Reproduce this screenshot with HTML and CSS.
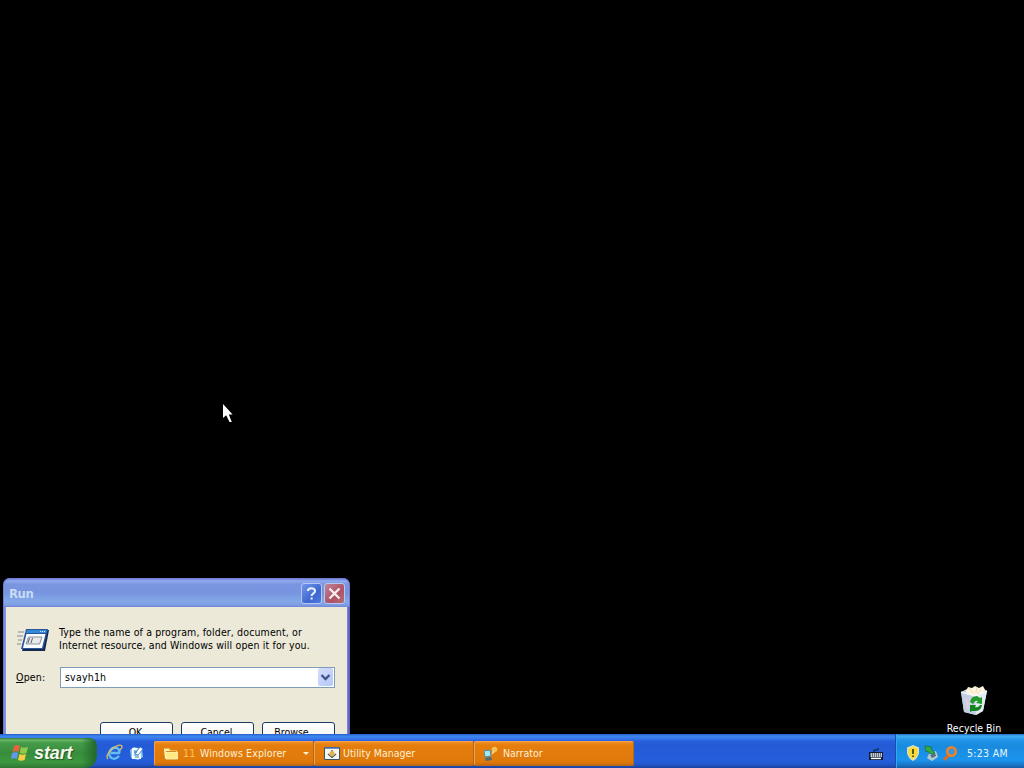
FILE: index.html
```html
<!DOCTYPE html>
<html lang="en">
<head>
<meta charset="utf-8">
<title>Desktop</title>
<link rel="stylesheet" href="styles.css">
</head>
<body>
<main class="desktop">
  <svg class="cursor" width="10" height="19" viewBox="0 0 10 19"><path d="M0 0V14L3.200 11.200L6.500 18H8.800L5.800 10.500H9.600Z" fill="#fff"/></svg>

  <div class="recycle">
    <svg width="32" height="32" viewBox="0 0 32 32">
      <path d="M3 7L9 4L26 4L29 6L25 26L18 30L6 27Z" fill="#c9d5e4"/>
      <path d="M3 7L6 27L18 30L17 11Z" fill="#c2cfe2"/>
      <path d="M17 11L29 6L25 26L18 30Z" fill="#e2edf0"/>
      <path d="M8 6L10 2L14 3L17 1L21 3L25 1L27 5L24 8L17 11L9 9Z" fill="#fff5dc"/>
      <path d="M11 3L15 8M19 2L18 8M23 4L20 9" stroke="#e8dbbd"/>
      <path d="M3 7L17 11L29 6" fill="none" stroke="#f7faff" stroke-width="1.2"/>
      <path d="M8 13L10 24M12 13L13 26M8 20L14 16" stroke="#dfcfe3" stroke-width="2"/>
      <path d="M12 17Q13 11 19 11L22 13L24 12V19L18 18L20 16Q17 15 15 19Z" fill="#239a2d"/>
      <path d="M12 20L18 20L17 22Q20 23 22 20L24 20Q23 26 17 26L14 26L12 27Z" fill="#168322"/>
    </svg>
    <span class="recycle-label">Recycle Bin</span>
  </div>

  <section class="run">
    <header class="run-title">
      <span class="run-name">Run</span>
      <span class="cap help"><svg width="19" height="19" viewBox="0 0 19 19"><path d="M6 7C6 3.400 13 3.400 13 7C13 9.600 9.600 9 9.600 12M9.600 13.600V15.600" fill="none" stroke="#e8f2ff" stroke-width="2.100"/></svg></span>
      <span class="cap close"><svg width="19" height="19" viewBox="0 0 19 19"><path d="M4.500 4.500L14.500 14.500M14.500 4.500L4.500 14.500" stroke="#f5eeee" stroke-width="2.300"/></svg></span>
    </header>
    <div class="run-body">
      <div class="intro">
        <svg width="33" height="24" viewBox="0 0 33 24">
          <path d="M10 2H32L28 23H5Z" fill="#17294f"/>
          <path d="M9 1H31L26 21H4Z" fill="#2c559f"/>
          <path d="M9.500 6H28.500L25 20H6Z" fill="#fafcff"/>
          <path d="M10 2H30L29 5H9Z" fill="#3289d5"/>
          <path d="M23 3.500H28" stroke="#d4efff" stroke-dasharray="1 1"/>
          <path d="M11.500 9H25L22.500 16H9Z" fill="#e9e9e5" stroke="#8a8f9c"/>
          <path d="M12.500 10L11 15M15.500 10L14 15" stroke="#555c70"/>
          <path d="M1 4H7M0 8H6M1 12H5M0 16H4" stroke="#858a96"/>
        </svg>
        <p class="copy">Type the name of a program, folder, document, or<br>Internet resource, and Windows will open it for you.</p>
      </div>
      <div class="open-row">
        <label class="open-label"><u>O</u>pen:</label>
        <div class="combo"><span>svayh1h</span><i class="drop"><svg width="15" height="18" viewBox="0 0 15 18"><path d="M3.500 7L7.500 11L11.500 7" fill="none" stroke="#40548b" stroke-width="2.300"/></svg></i></div>
      </div>
      <div class="buttons"><span class="btn ok">OK</span><span class="btn cancel">Cancel</span><span class="btn browse">Browse...</span></div>
    </div>
  </section>
</main>

<footer class="taskbar">
  <div class="start">
    <svg width="18" height="18" viewBox="0 0 18 18">
      <path d="M3 2Q6 0 9 2L7.500 8Q5 6.500 1.500 8Z" fill="#e5633a"/>
      <path d="M10 3Q13 4.500 17 3L15.500 9Q12 10.500 8.700 9Z" fill="#8fca4c"/>
      <path d="M1.200 9Q4 7.500 7.200 9L5.700 15Q3 13.500 0 15Z" fill="#6398ee"/>
      <path d="M8.400 10Q11.500 11.500 15 10L13.600 16Q10 17.500 7 16Z" fill="#f5cd45"/>
    </svg>
    <span>start</span>
  </div>
  <div class="quick">
    <svg width="17" height="17" viewBox="0 0 17 17">
      <path d="M13 12Q9.500 16 5.500 14Q2 11.500 4 7Q6.500 2.500 11 4Q14.500 6 13 9H5" fill="none" stroke="#62bdf2" stroke-width="2.500"/>
      <path d="M2 15Q-1 12 5 6Q12 0 15.500 1.500Q17 3 14 6" fill="none" stroke="#e0bd65" stroke-width="1.300"/>
    </svg>
    <svg width="15" height="16" viewBox="0 0 15 16">
      <path d="M1 5L5 2L13 4L14 12L9 15L2 13Z" fill="#8bc4ef"/>
      <path d="M3 3H9L8 5H5V11H10V9L12 8V14H3Z" fill="#f4fcff"/>
      <path d="M6 9L11 2L14 4L9 10Z" fill="#fff" stroke="#3980bd" stroke-width=".8"/>
      <path d="M5 7H8M6 12H10" stroke="#397cbc"/>
    </svg>
  </div>
  <div class="tasks">
    <div class="task group">
      <svg width="16" height="16" viewBox="0 0 16 16"><path d="M0 2H5L7 4H13V13H1Z" fill="#e9b64c"/><path d="M0 3H5L6 5H12V12H1Z" fill="#fff2a8"/><path d="M2 6H13.500V13H2Z" fill="#ffe980" stroke="#fff8c9" stroke-width=".8"/><path d="M2 5.500H12" stroke="#cf8c2c"/></svg>
      <span class="count">11</span><span class="explorer">Windows Explorer</span><i class="caret"></i>
    </div>
    <div class="task">
      <svg width="16" height="16" viewBox="0 0 16 16"><path d="M.5 1.500H15.500V13.500H.5Z" fill="#f7f7ed" stroke="#3a5368"/><path d="M1 2H15" stroke="#446fad" stroke-width="1.500"/><path d="M8 4V7M4 8L8 11.500L12 8" fill="none" stroke="#4e5964" stroke-width="1.300"/><circle cx="8" cy="7.500" r="2.500" fill="#e6b34a"/></svg>
      <span class="utility">Utility Manager</span>
    </div>
    <div class="task">
      <svg width="16" height="16" viewBox="0 0 16 16"><path d="M0 5L6 4L7 10L1 11Z" fill="#a9e8f5" stroke="#3f8fb4"/><path d="M1 12L7 11L8 14L2 15Z" fill="#536875"/><circle cx="10.500" cy="3.500" r="2.800" fill="#f3bf59"/><path d="M9 5L7 9L11 6" fill="#ffe09a"/></svg>
      <span class="narrator">Narrator</span>
    </div>
  </div>
  <svg class="keyboard" width="14" height="14" viewBox="0 0 14 14"><path d="M5 5V3H9V1" fill="none" stroke="#101c36"/><path d="M0 5H14V13H0Z" fill="#101c36"/><path d="M1.500 7H13M1.500 9H13" stroke="#fff" stroke-width="1.500" stroke-dasharray="1.500 .5"/><path d="M2 11.400H12" stroke="#fff" stroke-width="1.500"/></svg>
  <div class="tray">
    <svg width="14" height="16" viewBox="0 0 14 16"><path d="M7 0L13 2.500V8Q12 13 7 16Q2 13 1 8V2.500Z" fill="#d9e0c4"/><path d="M7 1.500L11.700 3.500V8Q11 12 7 14.500Q3 12 2.300 8V3.500Z" fill="#f8db37"/><path d="M7 4V9M7 10.500V12" stroke="#3a3510" stroke-width="1.600"/></svg>
    <svg width="16" height="17" viewBox="0 0 16 17"><path d="M6 9L13 6L15 12L9 16L4 13Z" fill="#b6c9cf"/><path d="M7 10L12 8L13 11L9 13Z" fill="#4f7480"/><path d="M2 1L9 2L8 4L12 8L8 9L4 6L3 7Z" fill="#35aa3d" stroke="#176d41" stroke-width=".7"/></svg>
    <svg width="17" height="17" viewBox="0 0 17 17"><circle cx="9.500" cy="6.500" r="4.300" fill="#3f94d8" stroke="#f08224" stroke-width="2.500"/><path d="M6.500 10.500L2 15" stroke="#dd6c22" stroke-width="3"/></svg>
    <time>5:23 AM</time>
  </div>
</footer>
</body>
</html>
```
FILE: styles.css
```css
* { box-sizing: border-box; }
body {
  margin: 0;
  width: 1024px;
  height: 768px;
  overflow: hidden;
  display: flex;
  flex-direction: column;
  background: #000;
  font: 10.5px/13px "DejaVu Sans Condensed", "DejaVu Sans", sans-serif;
  font-stretch: condensed;
  white-space: nowrap;
}
svg { display: block; flex: none; }
.desktop { position: relative; height: 734px; overflow: hidden; }
.cursor { position: absolute; left: 223px; top: 404px; }
.recycle {
  position: absolute;
  left: 936px;
  top: 685px;
  width: 76px;
  display: flex;
  flex-direction: column;
  align-items: center;
  gap: 5px;
  color: #fff;
}

/* Run dialog */
.run {
  position: absolute;
  left: 3px;
  top: 578px;
  width: 347px;
  height: 174px;
  padding: 0 3px;
  border-radius: 7px 7px 0 0;
  background: linear-gradient(90deg, #6971cc, #8093e5 2px, #7989df 344px, #5550b1);
}
.run-title {
  height: 29px;
  margin: 0 -3px;
  padding: 1px 5px 0 5px;
  display: flex;
  align-items: center;
  gap: 3px;
  border-radius: 7px 7px 0 0;
  border: 1px solid #727dd2;
  border-bottom: 0;
  background: linear-gradient(#7388dc 0, #93aaf0 2px, #7b96e0 5px, #7894e0 14px, #82a9e8 22px, #7f9de4 26px, #7184d5);
}
.run-name { flex: 1; color: #c8dcf8; font: bold 13px "DejaVu Sans Condensed", sans-serif; letter-spacing: -.4px; }
.cap { width: 21px; height: 21px; margin-right: -1px; border: 1px solid #b5c8f5; border-radius: 3px; }
.help { background: linear-gradient(135deg, #7396ed, #3f68d0 60%, #4879df); }
.close { background: linear-gradient(135deg, #c28399, #ae5364 60%, #b46a75); }
.run-body { height: 145px; padding: 19px 12px 0 11px; background: #ece9d8; }
.intro { display: flex; gap: 9px; letter-spacing: .13px; }
.intro svg { margin-top: 2px; }
.copy { margin: 0; }
.open-row { display: flex; align-items: center; margin-top: 15px; }
.open-label { width: 44px; margin-left: -1px; letter-spacing: .2px; }
.combo {
  width: 275px;
  height: 21px;
  padding: 0 1px 1px 4px;
  display: flex;
  align-items: center;
  justify-content: space-between;
  border: 1px solid #7f9db9;
  background: #fff;
  letter-spacing: .2px;
}
.drop { width: 15px; height: 18px; border-radius: 2px; background: linear-gradient(135deg, #d4defd, #b5c7f8); }
.buttons { display: flex; gap: 8px; margin: 34px 0 0 83px; }
.btn {
  width: 73px;
  height: 23px;
  padding-top: 3px;
  text-align: center;
  border: 1px solid #173c68;
  border-radius: 3px;
  background: linear-gradient(#fff, #f1f0e8);
}
.ok { padding-right: 2px; }
.cancel { padding-right: 2px; }
.browse { padding-right: 5px; }

/* Taskbar */
.taskbar {
  height: 34px;
  display: flex;
  color: #fff;
  background: linear-gradient(#2459c5 0, #3c86ee 2px, #3a7ded 4px, #2860dc 7px, #245ad6 11px, #255edb 27px, #2355c5 31px, #1a419d);
}
.start {
  width: 97px;
  height: 30px;
  margin-top: 4px;
  padding-left: 11px;
  display: flex;
  align-items: center;
  gap: 5px;
  border-radius: 0 8px 12px 0;
  background: linear-gradient(90deg, transparent 84%, #246c2d 98%), linear-gradient(#347b39 0, #6ab568 2px, #459b49 5px, #388d3c 15px, #3d9840 24px, #2f7733);
}
.start span { font: italic bold 18px/24px "Liberation Sans", sans-serif; letter-spacing: -.1px; text-shadow: 1px 1px 1px #245525; color: #f5faed; }
.quick { width: 57px; display: flex; align-items: center; gap: 6px; padding: 3px 0 0 9px; }
.tasks { display: flex; margin-top: 7px; height: 25px; width: 480px; }
.task {
  width: 160px;
  height: 25px;
  display: flex;
  align-items: center;
  gap: 3px;
  padding: 0 5px 0 9px;
  border: 1px solid #b76818;
  border-left-color: #f2a04c;
  border-top-color: #f2a04c;
  border-radius: 2px;
  background: linear-gradient(#ef9126 0, #e57e0e 3px, #df7909 20px, #c8690c);
  color: #fff0d5;
}
.count { width: 14px; color: #ffc75c; letter-spacing: .2px; }
.explorer { letter-spacing: .12px; }
.caret { margin: 0 -1px 0 auto; border: 3px solid transparent; border-top-color: #fff0d5; border-bottom: 0; }
.keyboard { margin: 13px 0 0 235px; }
.tray {
  margin-left: auto;
  width: 129px;
  height: 34px;
  padding: 4px 0 0 10px;
  display: flex;
  align-items: center;
  gap: 3px;
  border-left: 1px solid #174fa9;
  box-shadow: inset 1px 0 #38a8ee;
  background: linear-gradient(#2069bd 0, #41b0f5 2px, #2295e9 6px, #198bdf 12px, #1b94ed 26px, #1976c7 31px, #155ba5);
}
.tray time { margin-left: 5px; color: #e8f6ff; letter-spacing: .3px; }
```
